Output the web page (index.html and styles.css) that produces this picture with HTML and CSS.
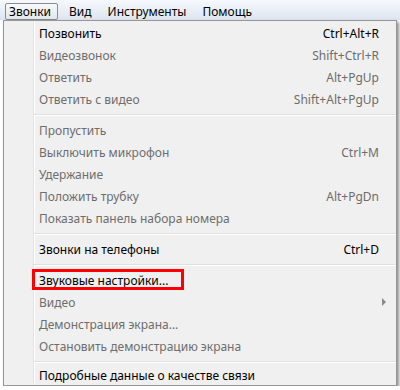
FILE: index.html
```html
<!DOCTYPE html>
<html>
<head>
    <title>Звонки</title>
    <link rel="stylesheet" href="styles.css">
</head>
<body>
    <div class="menubar">
        <span class="menu-title open">Звонки</span>
        <span class="menu-title">Вид</span>
        <span class="menu-title">Инструменты</span>
        <span class="menu-title">Помощь</span>
    </div>

    <div class="dropdown">
        <div class="item"><span>Позвонить</span><span class="keys">Ctrl+Alt+R</span></div>
        <div class="item disabled"><span>Видеозвонок</span><span class="keys">Shift+Ctrl+R</span></div>
        <div class="item disabled"><span>Ответить</span><span class="keys">Alt+PgUp</span></div>
        <div class="item disabled"><span>Ответить с видео</span><span class="keys">Shift+Alt+PgUp</span></div>
        <div class="sep"></div>
        <div class="item disabled"><span>Пропустить</span></div>
        <div class="item disabled"><span>Выключить микрофон</span><span class="keys">Ctrl+M</span></div>
        <div class="item disabled"><span>Удержание</span></div>
        <div class="item disabled"><span>Положить трубку</span><span class="keys">Alt+PgDn</span></div>
        <div class="item disabled"><span>Показать панель набора номера</span></div>
        <div class="sep"></div>
        <div class="item"><span>Звонки на телефоны</span><span class="keys">Ctrl+D</span></div>
        <div class="sep"></div>
        <div class="item marked"><span>Звуковые настройки...</span></div>
        <div class="item disabled"><span>Видео</span><span class="arrow"></span></div>
        <div class="item disabled"><span>Демонстрация экрана...</span></div>
        <div class="item disabled"><span>Остановить демонстрацию экрана</span></div>
        <div class="sep"></div>
        <div class="item last"><span>Подробные данные о качестве связи</span></div>
    </div>
</body>
</html>
```

FILE: styles.css
```css
body {
    margin: 0;
    background: #ffffff;
    font-family: "Noto Sans", sans-serif;
    font-size: 12px;
    color: #000;
    overflow: hidden;
}

.menubar {
    display: flex;
    align-items: center;
    height: 20px;
    padding-left: 5px;
    background: linear-gradient(#f6f9fd, #dde5f0);
    box-sizing: border-box;
    padding-top: 2px;
}

.menu-title {
    padding: 0 7px;
    height: 17px;
    line-height: 16px;
    box-sizing: border-box;
    border: 1px solid transparent;
    white-space: nowrap;
}

.menu-title.open {
    border: 1px solid #8a8c8f;
    border-radius: 2px;
    background: linear-gradient(#f7f9fb, #e3e8ee);
    padding: 0 6px 0 3px;
    margin-right: 3px;
}

.dropdown {
    position: relative;
    margin-left: 3px;
    width: 394px;
    box-sizing: border-box;
    border: 1px solid #979797;
    background-color: #f0f0f0;
    background-image: linear-gradient(90deg, transparent 29px, #e2e3e3 29px, #e2e3e3 30px, #ffffff 30px, #ffffff 31px, transparent 31px);
    box-shadow: 2px 2px 3px rgba(0, 0, 0, 0.45);
    padding-top: 1px;
}

.item {
    position: relative;
    display: flex;
    justify-content: space-between;
    align-items: center;
    height: 22px;
    padding: 0 17px 0 35px;
}

.item.disabled {
    color: #6d6d6d;
}

.item.last {
    height: 19px;
}

.keys {
    text-align: right;
}

.sep {
    height: 9px;
    margin-left: 30px;
    background: linear-gradient(transparent 4px, #e0e0e0 4px, #e0e0e0 5px, #ffffff 5px, #ffffff 6px, transparent 6px);
}

.marked::before {
    content: "";
    position: absolute;
    left: 28px;
    top: 0;
    width: 152px;
    height: 21px;
    border: 3px solid #ff0000;
    box-sizing: border-box;
}

.arrow {
    width: 0;
    height: 0;
    margin-right: -7px;
    border-top: 4px solid transparent;
    border-bottom: 4px solid transparent;
    border-left: 4px solid #8a8a8a;
}
```
